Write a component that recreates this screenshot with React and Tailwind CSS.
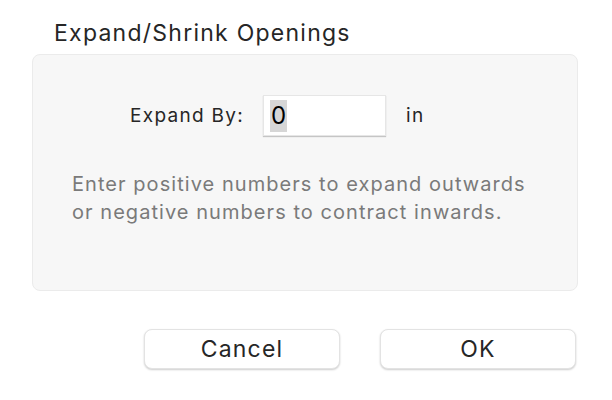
export default function App() {
  return (
    <div className="h-[400px] w-[612px] bg-white font-['Inter',sans-serif] text-[#262626]">
      <div className="px-[32px] pt-[17px]">
        <h1 className="pl-[22px] text-[23px] leading-[32px] tracking-[1.25px]">Expand/Shrink Openings</h1>
        <div className="mt-[5px] h-[237px] w-[546px] rounded-[8px] border border-[#ebebeb] bg-[#f7f7f7]">
          <div className="flex items-center pt-[40px]">
            <span className="ml-[97px] text-[19px] leading-[24px] tracking-[1.3px]">Expand By:</span>
            <div className="ml-[19px] flex h-[41px] w-[123px] items-center border border-[#e6e6e6] bg-white pl-[6px] shadow-[0_1px_1px_rgba(0,0,0,0.2)]">
              <span className="bg-[#d6d6d6] px-[1px] text-[24px] leading-[32px] text-black">0</span>
            </div>
            <span className="ml-[20px] text-[19px] leading-[24px] tracking-[1.3px]">in</span>
          </div>
          <p className="mt-[34px] pl-[39px] text-[20px] leading-[28px] tracking-[1.05px] text-[#7a7a7a]">
            Enter positive numbers to expand outwards
            <br />
            or negative numbers to contract inwards.
          </p>
        </div>
        <div className="mt-[38px] flex justify-end gap-[40px] pr-[4px]">
          <button className="h-[40px] w-[196px] rounded-[8px] border border-[#e3e3e3] bg-white text-[23px] tracking-[1.2px] text-[#262626] shadow-[0_1px_2px_rgba(0,0,0,0.2)]">
            Cancel
          </button>
          <button className="h-[40px] w-[196px] rounded-[8px] border border-[#e3e3e3] bg-white text-[23px] tracking-[1.2px] text-[#262626] shadow-[0_1px_2px_rgba(0,0,0,0.2)]">
            OK
          </button>
        </div>
      </div>
    </div>
  );
}
